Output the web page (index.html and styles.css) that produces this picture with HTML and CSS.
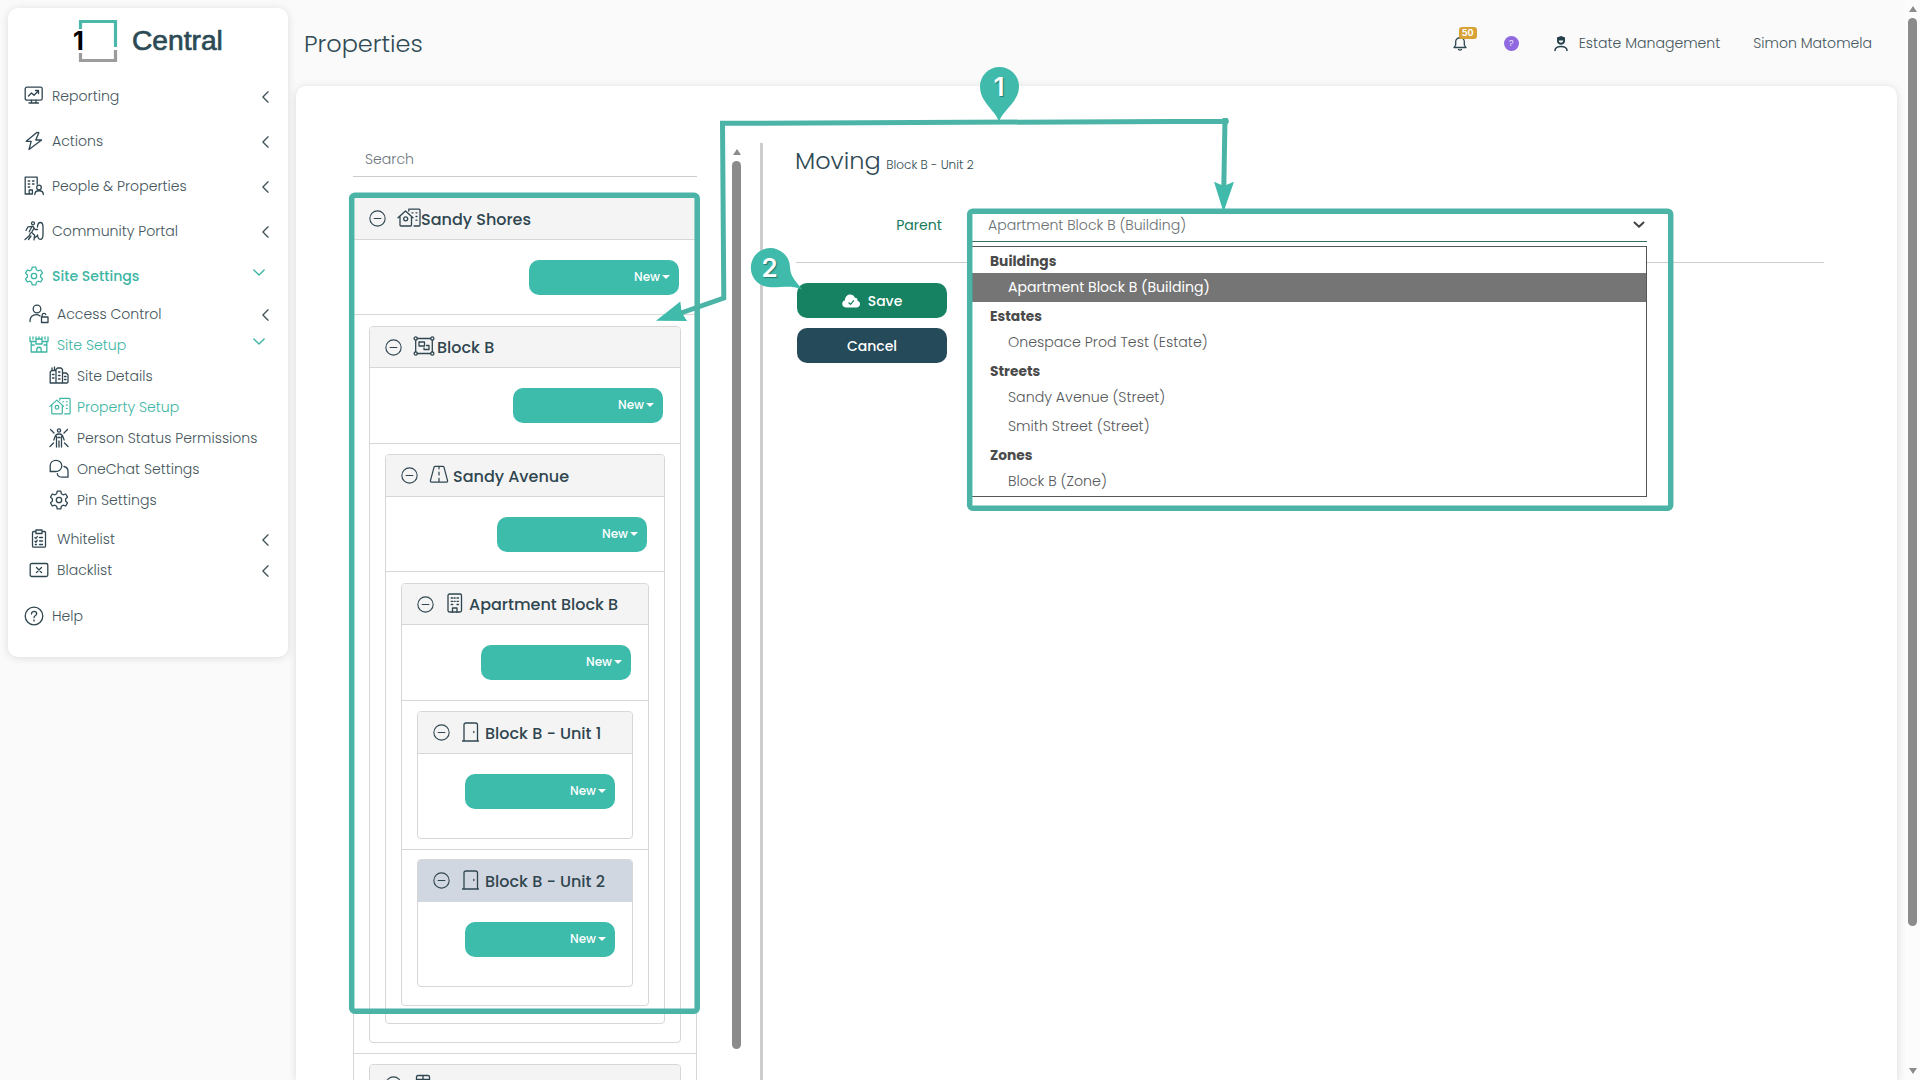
FILE: index.html
```html
<!DOCTYPE html>
<html lang="en">
<head>
<meta charset="utf-8">
<title>Properties</title>
<link rel="stylesheet" href="styles.css">
</head>
<body>
<svg class="defs" aria-hidden="true">
  <symbol id="i-report" viewBox="0 0 20 20"><rect x="1.2" y="1.2" width="17" height="13" rx="1.8"/><path d="M7.5 14.2v2.6M12 14.2v2.6M5 17h9.5M4.5 10l3-3 2.500 2.200 4.500-4.500M11.500 4.500h3v3"/></symbol>
  <symbol id="i-bolt" viewBox="0 0 20 20"><path d="M12.800 1.500 2.200 10.300h5L5 18.500 17.600 9h-5.800l3-7.300z"/></symbol>
  <symbol id="i-people" viewBox="0 0 20 20"><path d="M8 18H1.200V1.200h12v7M5.200 18v-4h3.200v4M4.200 5h1.500M8.500 5H10M4.200 8h1.500M8.500 8H10M4.200 11h1.500"/><circle cx="15" cy="11.500" r="2.300"/><path d="M10.800 18.500c0-5 8.500-5 8.500 0"/></symbol>
  <symbol id="i-community" viewBox="0 0 20 20"><circle cx="9" cy="2.300" r="1.500"/><path d="M2 9.500 4 5.800l5-.5 2 3.200h2.500M5.200 10.800 8 5.500M9.800 7.500 7.600 11.500l3 2.800-.6 4.500M1 18.500l4-3.500 1.500-3M4.500 18.500l2.500-3.500M10.500 17 13 15"/><path d="M13.500 6c.3-6 5.500-6 5.500 0v8c0 6-5.200 5.500-5.500 0"/></symbol>
  <symbol id="i-gear" viewBox="0 0 20 20"><circle cx="10" cy="10" r="2.700"/><path d="M8.200 1.200h3.600l.6 2.600 1.700 1 2.600-.8 1.800 3.100-1.900 1.900v2l1.900 1.900-1.800 3.100-2.600-.8-1.700 1-.6 2.600H8.200l-.6-2.600-1.700-1-2.600.8-1.800-3.100L3.400 11V9L1.500 7.100 3.300 4l2.600.8 1.700-1z"/></symbol>
  <symbol id="i-access" viewBox="0 0 20 20"><circle cx="8" cy="5" r="3.800"/><path d="M1 17.500c0-7 6.500-8 10-5.500M12.500 13h6.500v5.500h-6.500zM13.200 13v-2c0-2.200 3.200-2.200 3.500-.5"/></symbol>
  <symbol id="i-castle" viewBox="0 0 20 20"><path d="M1 2v4.500h6V2M4 2v2M13 2v4.500h6V2M16 2v2M2.200 6.500V17h15.600V6.500M7 9h6M7 6.500V9M13 6.500V9M2.200 10h3M15 10h3M7.800 17v-2.500c0-3 4.400-3 4.400 0V17M7 4h6M10 2v2"/></symbol>
  <symbol id="i-city" viewBox="0 0 20 20"><path d="M1.200 17V6l1.500-1.500H7V17M3 4.500V2M5.500 4.500V1M7 17V3.500L8.500 2H12l1.500 1.500V17M13.500 7h3.800L19 8.700V16l-1 1H1.200M3.500 8.500H5M3.500 12H5M9.500 6h1.500M9.500 9.500h1.500M9.500 13h1.500M15.500 10.500H17M15.500 13.500H17"/></symbol>
  <symbol id="i-house" viewBox="0 0 24 20"><path d="M1 9.800 8.500 3l7.500 6.800M3 8.500V17q0 1 1 1h9.500q1 0 1-1V8.500M11.800 3V1.200H22q1 0 1 1V17q0 1-1 1h-5M15 4.800h1M19 4.800h1M19 8.500h1M19 12.200h1"/><circle cx="8.700" cy="10.800" r="2"/></symbol>
  <symbol id="i-person" viewBox="0 0 20 20"><circle cx="10" cy="2.500" r="1.600"/><path d="M10 6c-3.500 0-3.500 1.500-5.200 6M10 6c3.500 0 3.500 1.500 5.200 6M7.500 8.500V19M12.500 8.500V19M10 13v6M1.500 1.500 5 5M18.500 1.500 15 5M1 18.500 4.500 15M19 18.500 15.500 15M9 9.500h2"/></symbol>
  <symbol id="i-chat" viewBox="0 0 20 20"><path d="M1.200 12.500V6.800c0-7.300 11.600-7.300 11.600 0 0 4-3.500 5.700-6 5.700zM15 7.500c3 .5 4 2.500 4 5v5.700h-5.500c-3 0-5-1.500-5.200-3.500"/></symbol>
  <symbol id="i-clip" viewBox="0 0 20 20"><path d="M7 2.500H4.800q-1.300 0-1.300 1.300V17q0 1.200 1.300 1.200h10.400q1.300 0 1.300-1.200V3.800q0-1.300-1.300-1.300H13M7 1h6v3.500H7zM6 8.500l1 1 1.300-2M6 12.200l1 1 1.300-2M10.500 8.500h3M10.500 12h3M6.300 15.500h1.200M10.500 15.500h3"/></symbol>
  <symbol id="i-black" viewBox="0 0 20 20"><rect x="1.200" y="3.500" width="17.600" height="13" rx="1.500"/><path d="m7.500 7.500 5 5M12.500 7.500l-5 5"/></symbol>
  <symbol id="i-help" viewBox="0 0 20 20"><circle cx="10" cy="10" r="8.800"/><path d="M7.500 8c0-3.500 5.200-3.200 5.200-.3 0 2-2.700 1.800-2.700 4M10 14v1"/></symbol>
  <symbol id="i-minus" viewBox="0 0 20 20"><circle cx="10" cy="10" r="9"/><path d="M6 10h8"/></symbol>
  <symbol id="i-zone" viewBox="0 0 22 20"><circle cx="2.700" cy="2.500" r="1.600"/><circle cx="19.300" cy="2.500" r="1.600"/><circle cx="2.700" cy="17.500" r="1.600"/><circle cx="19.300" cy="17.500" r="1.600"/><path d="M4.300 2.500h13.400M4.300 17.500h13.400M2.700 4.100v11.800M19.300 4.100v11.800M6 6h5.500v4H6zM13.500 9.500h2.500v4h-5v-1.500"/></symbol>
  <symbol id="i-road" viewBox="0 0 20 20"><path d="M6 1.500h8q1 0 1.300 1L19 16.500q.3 1.500-1 1.500H2q-1.300 0-1-1.500L4.700 2.500q.3-1 1.300-1zM10 1.500V4M10 7.500v3M10 14v4"/></symbol>
  <symbol id="i-bldg" viewBox="0 0 16 20"><rect x="1" y="1" width="13.500" height="18" rx="1.500"/><path d="M5.500 19v-4h4.500v4M4.200 5h1.500M7.200 5h1M10 5h1.500M4.200 8.300h1.500M7.200 8.300h1M10 8.300h1.500M4.200 11.500h1.500M10 11.500h1.500"/></symbol>
  <symbol id="i-street" viewBox="0 0 16 20"><path d="M1.500 19V3q0-1.500 1.500-1.500h10q1.500 0 1.500 1.500v2.500h-13M8 1.500V19M14.500 5.500V19"/></symbol>
  <symbol id="i-door" viewBox="0 0 17 20"><path d="M2 19V3q0-2 2-2h9.500q2 0 2 2v16M.3 19h16.200M11.800 9.500v1"/></symbol>
  <symbol id="i-left" viewBox="0 0 8 14"><path d="M7 1 1 7l6 6"/></symbol>
  <symbol id="i-down" viewBox="0 0 14 8"><path d="m1 1 6 6 6-6"/></symbol>
</svg>

<div class="page">
  <aside class="sidebar">
    <div class="logo">
      <svg class="logo-mark" viewBox="0 0 48 44"><path d="M7.500 10V2.500h35V28" stroke="#4bb8a9"/><path d="M7.500 34v7.500h35V31" stroke="#9c9c9c"/></svg>
      <span class="logo-one">1</span>
      <span class="logo-name">Central</span>
    </div>
    <nav class="menu">
      <a class="item"><svg><use href="#i-report"/></svg><span>Reporting</span><svg class="chev"><use href="#i-left"/></svg></a>
      <a class="item"><svg><use href="#i-bolt"/></svg><span>Actions</span><svg class="chev"><use href="#i-left"/></svg></a>
      <a class="item"><svg><use href="#i-people"/></svg><span>People &amp; Properties</span><svg class="chev"><use href="#i-left"/></svg></a>
      <a class="item"><svg><use href="#i-community"/></svg><span>Community Portal</span><svg class="chev"><use href="#i-left"/></svg></a>
      <a class="item on strong"><svg><use href="#i-gear"/></svg><span>Site Settings</span><svg class="chev open"><use href="#i-down"/></svg></a>
      <div class="sub">
        <a class="item"><svg><use href="#i-access"/></svg><span>Access Control</span><svg class="chev"><use href="#i-left"/></svg></a>
        <a class="item on"><svg><use href="#i-castle"/></svg><span>Site Setup</span><svg class="chev open"><use href="#i-down"/></svg></a>
        <div class="subsub">
          <a class="item"><svg><use href="#i-city"/></svg><span>Site Details</span></a>
          <a class="item on"><svg class="wide"><use href="#i-house"/></svg><span>Property Setup</span></a>
          <a class="item"><svg><use href="#i-person"/></svg><span>Person Status Permissions</span></a>
          <a class="item"><svg><use href="#i-chat"/></svg><span>OneChat Settings</span></a>
          <a class="item"><svg><use href="#i-gear"/></svg><span>Pin Settings</span></a>
        </div>
        <a class="item"><svg><use href="#i-clip"/></svg><span>Whitelist</span><svg class="chev"><use href="#i-left"/></svg></a>
        <a class="item"><svg><use href="#i-black"/></svg><span>Blacklist</span><svg class="chev"><use href="#i-left"/></svg></a>
      </div>
      <a class="item"><svg><use href="#i-help"/></svg><span>Help</span></a>
    </nav>
  </aside>

  <div class="content">
    <header class="topbar">
      <h1>Properties</h1>
      <div class="bell"><svg viewBox="0 0 14 15"><path d="M1 11.500h12L11.300 9V5.500C11.300.5 2.700.5 2.700 5.500V9zM5.500 13.500q1.500 1.200 3 0"/></svg><span class="badge">50</span></div>
      <span class="hint">?</span>
      <div class="role"><svg viewBox="0 0 14 15"><path class="solid" d="M3 1.500 5 .8 7 0l2 .8 2 .7V5c0 5-8 5-8 0z"/><path class="face" d="M4.800 4.500h4.400c0 3-4.400 3-4.400 0z"/><path d="M1 14.500c0-5.500 12-5.500 12 0"/></svg><span>Estate Management</span></div>
      <span class="user">Simon Matomela</span>
    </header>

    <main class="panel">
      <section class="tree">
        <div class="search"><span>Search</span></div>
        <div class="card">
          <div class="head"><svg><use href="#i-minus"/></svg><span class="ic"><svg class="w24"><use href="#i-house"/></svg></span><b>Sandy Shores</b></div>
          <div class="body"><span class="new"><i>New</i></span></div>
          <div class="kid">
            <div class="card">
              <div class="head"><svg><use href="#i-minus"/></svg><span class="ic"><svg class="w22"><use href="#i-zone"/></svg></span><b>Block B</b></div>
              <div class="body"><span class="new"><i>New</i></span></div>
              <div class="kid">
                <div class="card">
                  <div class="head"><svg><use href="#i-minus"/></svg><span class="ic"><svg class="w20"><use href="#i-road"/></svg></span><b>Sandy Avenue</b></div>
                  <div class="body"><span class="new"><i>New</i></span></div>
                  <div class="kid">
                    <div class="card">
                      <div class="head"><svg><use href="#i-minus"/></svg><span class="ic"><svg class="w16"><use href="#i-bldg"/></svg></span><b>Apartment Block B</b></div>
                      <div class="body"><span class="new"><i>New</i></span></div>
                      <div class="kid">
                        <div class="card leaf">
                          <div class="head"><svg><use href="#i-minus"/></svg><span class="ic"><svg class="w17"><use href="#i-door"/></svg></span><b>Block B - Unit 1</b></div>
                          <div class="body"><span class="new"><i>New</i></span></div>
                        </div>
                      </div>
                      <div class="kid">
                        <div class="card leaf picked">
                          <div class="head"><svg><use href="#i-minus"/></svg><span class="ic"><svg class="w17"><use href="#i-door"/></svg></span><b>Block B - Unit 2</b></div>
                          <div class="body"><span class="new"><i>New</i></span></div>
                        </div>
                      </div>
                    </div>
                  </div>
                </div>
              </div>
            </div>
          </div>
          <div class="kid">
            <div class="card">
              <div class="head"><svg><use href="#i-minus"/></svg><span class="ic"><svg class="w16"><use href="#i-street"/></svg></span></div>
            </div>
          </div>
        </div>
      </section>
      <div class="vscroll"><span class="up"></span><span class="thumb"></span></div>
      <section class="form">
        <h2><span>Moving</span> <small>Block B - Unit 2</small></h2>
        <div class="field">
          <label>Parent</label>
          <div class="select"><span>Apartment Block B (Building)</span><svg viewBox="0 0 12 8"><path d="m1.500 1.500 4.500 4.300 4.500-4.300"/></svg>
            <div class="options">
              <strong>Buildings</strong>
              <span class="opt sel">Apartment Block B (Building)</span>
              <strong>Estates</strong>
              <span class="opt">Onespace Prod Test (Estate)</span>
              <strong>Streets</strong>
              <span class="opt">Sandy Avenue (Street)</span>
              <span class="opt">Smith Street (Street)</span>
              <strong>Zones</strong>
              <span class="opt">Block B (Zone)</span>
            </div>
          </div>
        </div>
        <div class="actions">
          <button class="save"><svg viewBox="0 0 18 14"><path class="cloud" d="M4.500 13.500C-.8 13.500-1 7 3 6.200 3 0 11 -1.500 12.800 3.800 15 3.600 15.800 5.500 15.500 6.800 19.500 8 18.500 13.500 14.500 13.500z"/><path d="m7 9 1.500 1.300 3-3.500"/></svg><span>Save</span></button>
          <button class="cancel"><span>Cancel</span></button>
        </div>
      </section>
    </main>
  </div>
  <div class="pagescroll"><span class="up"></span><span class="thumb"></span><span class="dn"></span></div>
</div>

<svg class="notes" viewBox="0 0 1920 1080">
  <g fill="none" stroke="#4bb4a7" stroke-width="5.500">
    <rect x="351.700" y="195.200" width="345.500" height="816" rx="3"/>
    <rect x="969.700" y="211.200" width="701" height="297" rx="3"/>
    <path d="M681 313 723.800 298 722.500 123.300 1225 121.300M1225 118 1223.800 188" stroke-width="5"/>
  </g>
  <circle cx="1225.500" cy="121.300" r="3.300" fill="#4bb4a7"/>
  <g fill="#3fbaab">
    <path d="M656 320.700 680.300 301.500 681.700 312.500 687 321z"/>
    <path d="M1223.500 212 1214 181.700 1223.700 186 1234 181.700z"/>
    <path d="M999 121.500C995 110 980 102 980 86.500a19.500 19.500 0 0 1 39 0C1019 102 1003 110 999 121.500z"/>
    <path d="M802 289.500C790 285 785 287.500 770.500 287.300A19.600 19.600 0 1 1 790 267C790 277 797 282 802 289.500z"/>
  </g>
  <text class="pin" x="999" y="96">1</text>
  <text class="pin" x="769.500" y="277">2</text>
</svg>
</body>
</html>
```
FILE: styles.css
```css
* { box-sizing: border-box; }
body { margin: 0; height: 1080px; overflow: hidden; background: #fafafa; color: #45565c; font: 300 14.080px/20px "Poppins", "Inter", "Open Sans", sans-serif; }
svg { fill: none; stroke: currentColor; stroke-width: 1.300; stroke-linecap: round; stroke-linejoin: round; flex: none; overflow: visible; }
.defs { position: absolute; width: 0; height: 0; }
.page { display: flex; height: 1080px; white-space: nowrap; }

.sidebar { width: 280px; height: 649px; margin: 8px; background: #fff; border-radius: 10px; box-shadow: 0 1px 8px rgba(0, 0, 0, .12); flex: none; }
.logo { display: flex; height: 65px; padding: 11px 0 0 65px; position: relative; }
.logo-mark { width: 48px; height: 44px; stroke-width: 3.200; stroke-linecap: butt; stroke-linejoin: miter; }
.logo-one { position: absolute; left: 65px; top: 20px; font: 700 25px/27px "Inter", sans-serif; color: #000; }
.logo-name { margin-left: 11px; font: 400 28.200px/43px "Liberation Sans", sans-serif; color: #2c4a56; -webkit-text-stroke: .7px #2c4a56; }
.menu { display: flex; flex-direction: column; }
.item { display: flex; align-items: center; height: 45px; padding: 0 19px 0 16px; color: #45565c; }
.item > svg:first-child { width: 20px; height: 20px; margin-right: 8px; color: #2f4650; }
.item > svg.wide:first-child { width: 22px; height: 19px; margin-right: 6px; }
.item > .chev { width: 7px; height: 12px; margin-left: auto; stroke-width: 1.600; position: relative; top: 1px; }
.item > .chev.open { width: 12px; height: 7px; margin-right: 4px; top: -3px; }
.item.on, .item.on > svg:first-child { color: #3db5a4; }
.item.strong { font-weight: 500; }
.sub .item { height: 31px; padding-left: 21px; }
.sub { padding-bottom: 8px; }
.subsub { padding-bottom: 8px; }
.subsub .item { padding-left: 41px; }

.content { display: flex; flex-direction: column; width: 1601px; }
.topbar { display: flex; align-items: center; height: 86px; padding: 0 25px 0 8px; flex: none; }
h1, h2 { margin: 0; font-size: 24px; font-weight: 300; color: #2f4a54; }
h1 { line-height: 30px; padding-top: 1px; margin-right: auto; }
.bell { position: relative; width: 14px; height: 15px; margin-right: 37px; color: #2f4650; }
.bell svg { display: block; width: 14px; height: 15px; }
.badge { position: absolute; left: 6px; top: -9px; width: 18px; height: 12px; border-radius: 3px; background: #d9a237; color: #fff; font: 700 9px/12px "Inter", sans-serif; text-align: center; }
.hint { width: 15px; height: 15px; margin-right: 35px; border-radius: 50%; background: #9068df; color: #fff; font-size: 9px; line-height: 15px; text-align: center; }
.role { display: flex; align-items: center; gap: 11px; margin-right: 33px; }
.role svg { width: 14px; height: 15px; color: #24404a; stroke-width: 1.500; }
.role .solid { fill: #24404a; stroke: none; }
.role .face { fill: #fff; stroke: none; }

.panel { display: flex; flex: 1; min-height: 0; overflow: hidden; background: #fff; border-radius: 10px 10px 0 0; box-shadow: 0 1px 8px rgba(0, 0, 0, .12); padding-top: 57px; }
.tree { width: 344px; margin-left: 57px; height: 937px; overflow: hidden; flex: none; }
.search { height: 34px; padding: 6px 12px; margin-bottom: 20.300px; border-bottom: 1px solid #ccc; color: #6c757d; }
.card { border: 1px solid #d7d7d7; border-radius: 4px; padding-bottom: 7.700px; }
.card.leaf { padding-bottom: 0; }
.head { display: flex; align-items: center; height: 41.500px; padding-left: 15px; background: #f4f4f4; border-bottom: 1px solid #d7d7d7; border-radius: 3px 3px 0 0; color: #2f4650; }
.head > svg { width: 17px; height: 17px; margin-right: 11px; }
.ic { display: flex; width: 24px; height: 22px; }
.head b { padding-top: 2px; font-size: 16px; font-weight: 500; }
.w24 { width: 24px; height: 20px; }
.w22 { width: 22px; height: 20px; }
.w20 { width: 20px; height: 19px; }
.w16 { width: 16px; height: 20px; margin-left: 2px; }
.w17 { width: 17px; height: 20px; margin-left: 1px; }
.body { display: flex; justify-content: flex-end; height: 75.500px; padding: 20px 17px 0 0; border-bottom: 1px solid #d7d7d7; }
.leaf .body { height: 84px; border-bottom: 0; }
.new { display: flex; justify-content: flex-end; align-items: center; gap: 2px; width: 150px; height: 35px; padding: 0 9px 1px 0; border-radius: 10px; background: #3dbbab; color: #fff; }
.new i { font: 500 12px/16px "Poppins", "Inter", sans-serif; }
.new::after { content: ""; border: 4px solid transparent; border-top: 4px solid #fff; border-bottom: 0; }
.kid { padding: 10.500px 15px 10px; }
.kid + .kid { padding-top: 9.700px; border-top: 1px solid #d7d7d7; }
.picked .head { background: #d1d7e0; border-color: #d1d7e0; }

.vscroll { display: flex; flex-direction: column; align-items: center; width: 9px; margin: 6px 19px 0 35px; flex: none; }
.up { border: 4px solid transparent; border-bottom: 6px solid #8b8b8b; border-top: 0; }
.dn { border: 4px solid transparent; border-top: 6px solid #8b8b8b; border-bottom: 0; }
.thumb { width: 9px; height: 888px; margin-top: 6px; border-radius: 5px; background: #8b8b8b; flex: none; }

.form { flex: 1; padding: 0 73px 0 33px; border-left: 3px solid #cdcdcd; }
h2 { height: 36px; line-height: 36px; }
h2 span { margin-left: -1px; }
h2 small { font-size: 12.100px; margin-left: -1px; }
.field { display: flex; height: 84px; padding: 26px 0 0; border-bottom: 1px solid #ccc; }
label { width: 146px; text-align: right; line-height: 40px; color: #177a5b; font-weight: 400; }
.select { position: relative; display: flex; align-items: center; justify-content: space-between; width: 677px; height: 37px; margin-left: 28px; padding: 3px 2px 0 18px; border-bottom: 1px solid #37705f; color: #6a6f72; }
.select > svg { width: 12px; height: 8px; stroke-width: 2; color: #444; }
.options { position: absolute; left: 0; right: 0; top: 41px; display: flex; flex-direction: column; border: 1px solid #555; background: #fff; color: #55585a; font-size: 14.200px; }
.options strong { height: 26px; padding: 2px 0 0 19px; line-height: 26px; font-size: 13.800px; font-weight: 700; color: #4a4a4a; }
.opt { height: 29px; padding-left: 37px; line-height: 28px; }
.opt.sel { background: #757575; color: #fff; font-size: 14.080px; font-weight: 400; }
.actions { display: flex; flex-direction: column; gap: 10px; padding-top: 20px; }
button { display: flex; align-items: center; justify-content: center; gap: 8px; width: 150px; height: 35px; margin-left: 1px; border: 0; border-radius: 10px; color: #fff; font: 500 14px/20px "Poppins", "Inter", sans-serif; }
.save { background: #178261; }
.cancel { background: #254a59; }
.save svg { width: 18px; height: 14px; color: #178261; }
.cloud { fill: #fff; stroke: none; }

.pagescroll { display: flex; flex-direction: column; align-items: center; width: 15px; margin-left: auto; padding: 6px 3px; background: #fcfcfc; }
.pagescroll .thumb { height: 908px; margin: 6px 0 auto; }

.notes { position: absolute; left: 0; top: 0; width: 1920px; height: 1080px; stroke: none; stroke-linecap: butt; stroke-linejoin: miter; }
.pin { fill: #fff; font: 600 26px "Inter", sans-serif; text-anchor: middle; text-shadow: 1px 1px 1px rgba(0, 60, 60, .5); }
```
